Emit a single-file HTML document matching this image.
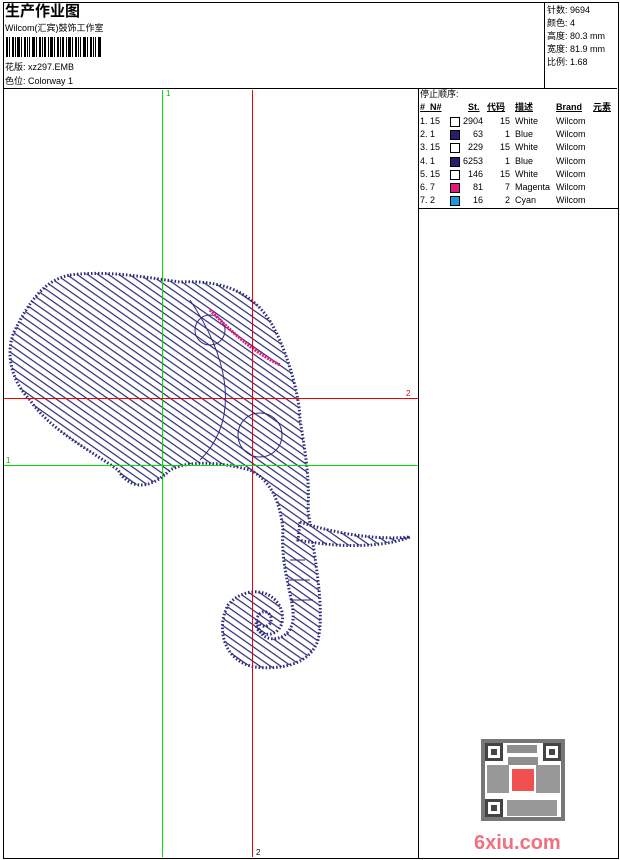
<!DOCTYPE html><html><head><meta charset="utf-8"><style>
*{margin:0;padding:0}
body{width:620px;height:860px;background:#fff;position:relative;overflow:hidden;font-family:"Liberation Sans","Noto Sans CJK SC",sans-serif;font-size:9px;color:#000}
.a{position:absolute}
.t{position:absolute;white-space:nowrap;line-height:11px}
</style></head><body>
<div class="a" style="left:3px;top:2px;width:614px;height:855px;border:1px solid #000"></div>
<div class="a" style="left:3px;top:88px;width:614px;height:1px;background:#000"></div>
<div class="a" style="left:544px;top:2px;width:1px;height:86px;background:#000"></div>
<div class="a" style="left:418px;top:88px;width:1px;height:770px;background:#000"></div>
<div class="a" style="left:418px;top:208px;width:200px;height:1px;background:#000"></div>
<div class="t" style="left:5px;top:3px;font-size:15px;line-height:18px;font-weight:bold">生产作业图</div>
<div class="t" style="left:5px;top:23px">Wilcom(汇宾)鼓饰工作室</div>
<svg class="a" style="left:6px;top:37px" width="96" height="20"><g fill="#000">
<rect x="0" y="0" width="2" height="20"/><rect x="3" y="0" width="1" height="20"/><rect x="6" y="0" width="2" height="20"/><rect x="9" y="0" width="1" height="20"/><rect x="11" y="0" width="3" height="20"/><rect x="15" y="0" width="1" height="20"/><rect x="18" y="0" width="2" height="20"/><rect x="21" y="0" width="1" height="20"/><rect x="23" y="0" width="1" height="20"/><rect x="26" y="0" width="3" height="20"/><rect x="30" y="0" width="1" height="20"/><rect x="33" y="0" width="2" height="20"/><rect x="36" y="0" width="1" height="20"/><rect x="38" y="0" width="2" height="20"/><rect x="42" y="0" width="1" height="20"/><rect x="44" y="0" width="3" height="20"/><rect x="48" y="0" width="1" height="20"/><rect x="51" y="0" width="2" height="20"/><rect x="54" y="0" width="1" height="20"/><rect x="56" y="0" width="2" height="20"/><rect x="60" y="0" width="1" height="20"/><rect x="62" y="0" width="3" height="20"/><rect x="66" y="0" width="1" height="20"/><rect x="69" y="0" width="2" height="20"/><rect x="72" y="0" width="1" height="20"/><rect x="74" y="0" width="1" height="20"/><rect x="77" y="0" width="3" height="20"/><rect x="81" y="0" width="1" height="20"/><rect x="84" y="0" width="2" height="20"/><rect x="87" y="0" width="1" height="20"/><rect x="89" y="0" width="1" height="20"/><rect x="92" y="0" width="3" height="20"/></g></svg>
<div class="t" style="left:5px;top:62px">花版: xz297.EMB</div>
<div class="t" style="left:5px;top:76px">色位: Colorway 1</div>
<div class="t" style="left:547px;top:5px">针数: 9694</div>
<div class="t" style="left:547px;top:18px">颜色: 4</div>
<div class="t" style="left:547px;top:31px">高度: 80.3 mm</div>
<div class="t" style="left:547px;top:44px">宽度: 81.9 mm</div>
<div class="t" style="left:547px;top:57px">比例: 1.68</div>
<div class="t" style="left:420px;top:89px">停止顺序:</div>
<div class="t" style="left:420px;top:102px;font-weight:bold;text-decoration:underline">#&nbsp; N#</div>
<div class="t" style="left:468px;top:102px;font-weight:bold;text-decoration:underline">St.</div>
<div class="t" style="left:487px;top:102px;font-weight:bold;text-decoration:underline">代码</div>
<div class="t" style="left:515px;top:102px;font-weight:bold;text-decoration:underline">描述</div>
<div class="t" style="left:556px;top:102px;font-weight:bold;text-decoration:underline">Brand</div>
<div class="t" style="left:593px;top:102px;font-weight:bold;text-decoration:underline">元素</div>
<div id="rows"></div>
<script>
var r=[["1. 15","#fff","2904","15","White"],["2. 1","#2a1d6e","63","1","Blue"],["3. 15","#fff","229","15","White"],["4. 1","#2a1d6e","6253","1","Blue"],["5. 15","#fff","146","15","White"],["6. 7","#e0197a","81","7","Magenta"],["7. 2","#1a9be0","16","2","Cyan"]];
var h="";r.forEach(function(x,i){var y=116+i*13.2;
h+='<div class="t" style="left:420px;top:'+y+'px">'+x[0]+'</div><div class="a" style="left:450px;top:'+(y+1)+'px;width:8px;height:8px;border:1px solid #000;background:'+x[1]+'"></div><div class="t" style="left:461px;top:'+y+'px;width:22px;text-align:right">'+x[2]+'</div><div class="t" style="left:490px;top:'+y+'px;width:20px;text-align:right">'+x[3]+'</div><div class="t" style="left:515px;top:'+y+'px">'+x[4]+'</div><div class="t" style="left:556px;top:'+y+'px">Wilcom</div>';});
document.getElementById('rows').innerHTML=h;
</script>
<svg class="a" style="left:0;top:0" width="620" height="860">
<defs><pattern id="p" width="6" height="6" patternUnits="userSpaceOnUse" patternTransform="rotate(35)"><rect width="6" height="6" fill="#fff"/><rect width="6" height="1.2" fill="#2a2a7a"/></pattern></defs>
<g stroke="#2a2a7a" stroke-width="3" fill="url(#p)" stroke-dasharray="1.5 2">
<path d="M70,275 C110,270 150,278 180,282 C220,280 255,290 275,330 C290,360 300,400 300,420 C305,450 310,480 308,510 C315,560 325,610 318,640 C310,665 280,670 255,667 C225,662 215,630 228,605 C245,585 275,588 282,612 C286,632 268,640 258,630 C252,620 262,605 270,615 C275,625 262,632 258,620 C255,645 290,645 293,620 C295,600 280,570 283,530 C280,500 270,480 250,470 C220,462 190,460 170,470 C150,490 130,490 118,470 C90,450 50,430 30,400 C10,380 5,350 15,330 C30,300 45,280 70,275Z"/>
<path d="M300,522 C340,535 380,540 410,537 C390,545 350,550 298,540Z"/>
</g>
<g stroke="#2a2a7a" stroke-width="1" fill="none">
<circle cx="260" cy="435" r="22"/><circle cx="210" cy="330" r="15"/><path d="M190,300 C230,360 240,420 200,460"/><path d="M290,560 L305,560 M288,580 L310,580 M290,600 L313,600"/>
</g>
<path d="M210,310 C230,330 250,350 280,365" stroke="#e0197a" stroke-width="3" fill="none" stroke-dasharray="2 1"/>
<line x1="162.5" y1="90" x2="162.5" y2="857" stroke="#00e000"/>
<line x1="252.5" y1="90" x2="252.5" y2="857" stroke="#f00000"/>
<line x1="4" y1="398.5" x2="418" y2="398.5" stroke="#f00000"/>
<line x1="4" y1="465.5" x2="418" y2="465.5" stroke="#00e000"/>
<text x="166" y="96" font-size="8" fill="#00c000" font-family="Liberation Sans">1</text>
<text x="6" y="463" font-size="8" fill="#00c000" font-family="Liberation Sans">1</text>
<text x="406" y="396" font-size="8" fill="#e00000" font-family="Liberation Sans">2</text>
<text x="256" y="855" font-size="8" fill="#000" font-family="Liberation Sans">2</text>
<g fill="#444">
<rect x="481" y="739" width="84" height="82" fill="#777"/>
<rect x="485" y="743" width="76" height="74" fill="#fff"/>
<rect x="485" y="743" width="18" height="18" fill="#444"/><rect x="488" y="746" width="12" height="12" fill="#fff"/><rect x="491" y="749" width="6" height="6"/>
<rect x="543" y="743" width="18" height="18"/><rect x="546" y="746" width="12" height="12" fill="#fff"/><rect x="549" y="749" width="6" height="6"/>
<rect x="485" y="799" width="18" height="18"/><rect x="488" y="802" width="12" height="12" fill="#fff"/><rect x="491" y="805" width="6" height="6"/>
<rect x="507" y="745" width="30" height="8" opacity=".6"/><rect x="487" y="765" width="22" height="28" opacity=".55"/><rect x="536" y="765" width="24" height="28" opacity=".55"/><rect x="507" y="800" width="50" height="16" opacity=".55"/><rect x="508" y="757" width="30" height="8" opacity=".6"/>
</g>
<rect x="512" y="769" width="22" height="22" fill="#f05050"/>
<text x="474" y="849" font-size="20" font-weight="bold" fill="#f07080" font-family="Liberation Sans">6xiu.com</text>
</svg>
</body></html>
